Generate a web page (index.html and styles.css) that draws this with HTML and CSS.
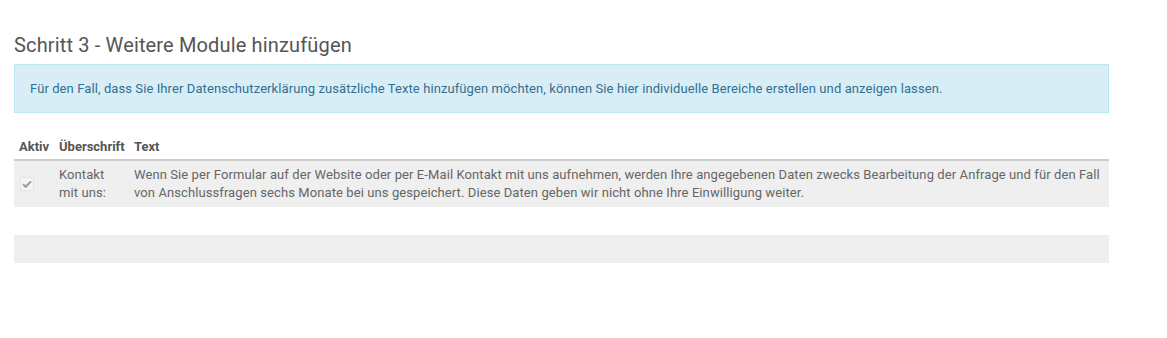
FILE: index.html
```html
<!DOCTYPE html>
<html lang="de">
<head>
  <meta charset="UTF-8">
  <title>Schritt 3 - Weitere Module hinzufügen</title>
  <link rel="stylesheet" href="styles.css">
</head>
<body>
  <div class="container">
    <h3>Schritt 3 - Weitere Module hinzufügen</h3>
    <div class="alert-info">
      Für den Fall, dass Sie Ihrer Datenschutzerklärung zusätzliche Texte hinzufügen möchten, können Sie hier individuelle Bereiche erstellen und anzeigen lassen.
    </div>

    <table class="modules">
      <thead>
        <tr>
          <th class="col-active">Aktiv</th>
          <th class="col-title">Überschrift</th>
          <th>Text</th>
        </tr>
      </thead>
      <tbody>
        <tr>
          <td class="check-cell">
            <span class="check">
              <svg width="10" height="8" viewBox="0 0 10 8"><path d="M1 4.2 L3.8 6.8 L9 1.4" fill="none" stroke="#9a9a9a" stroke-width="2"/></svg>
            </span>
          </td>
          <td>Kontakt mit uns:</td>
          <td>Wenn Sie per Formular auf der Website oder per E-Mail Kontakt mit uns aufnehmen, werden Ihre angegebenen Daten zwecks Bearbeitung der Anfrage und für den Fall von Anschlussfragen sechs Monate bei uns gespeichert. Diese Daten geben wir nicht ohne Ihre Einwilligung weiter.</td>
        </tr>
      </tbody>
    </table>

    <div class="table-footer"></div>
  </div>
</body>
</html>
```

FILE: styles.css
```css
* { margin: 0; padding: 0; box-sizing: border-box; }

body {
  font-family: Roboto, 'Liberation Sans', sans-serif;
  font-size: 13px;
  color: #666;
  background: #fff;
}

.container {
  width: 1095px;
  margin-left: 14px;
  padding-top: 32px;
}

h3 {
  font-size: 20px;
  font-weight: 400;
  color: #555;
  line-height: 26px;
  margin-bottom: 6px;
  letter-spacing: 0.15px;
}

.alert-info {
  background: #d9edf7;
  border: 1px solid #bce8f1;
  color: #31708f;
  padding: 15px 15px;
  line-height: 17px;
  font-size: 13px;
  letter-spacing: 0.09px;
}

.modules {
  width: 100%;
  border-collapse: collapse;
  margin-top: 23px;
  table-layout: fixed;
}

.modules th {
  text-align: left;
  font-weight: 700;
  font-size: 13px;
  color: #555;
  padding: 2px 5px 4px;
  line-height: 17px;
  border-bottom: 2px solid #ccc;
}

.modules .col-active { width: 40px; }
.modules .col-title { width: 75px; }

.modules td {
  background: #eeefee;
  vertical-align: top;
  padding: 5px 5px 5px;
  line-height: 18px;
  font-size: 13px;
  letter-spacing: 0.09px;
}

.modules .check-cell {
  vertical-align: middle;
  padding-left: 6px;
}

.check {
  display: flex;
  align-items: center;
  justify-content: center;
  width: 14px;
  height: 14px;
  border: 1px solid #e4e4e4;
  background: #f5f5f5;
}

.table-footer {
  height: 28px;
  margin-top: 28px;
  background: #eeefee;
}
```
